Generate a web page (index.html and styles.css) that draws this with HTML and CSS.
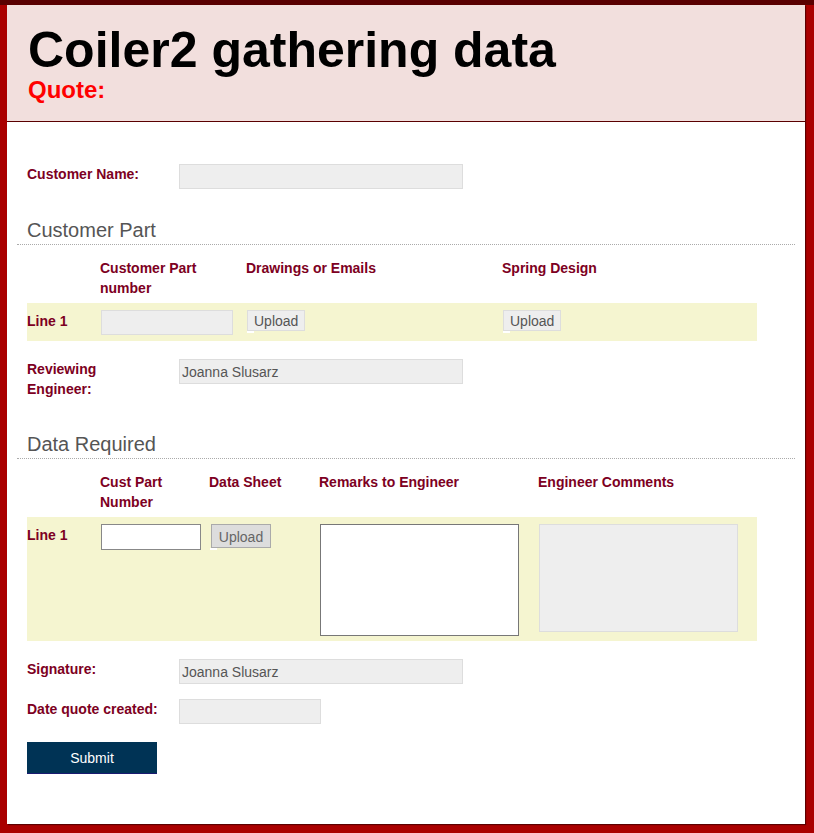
FILE: index.html
```html
<!DOCTYPE html>
<html lang="en">
<head>
  <meta charset="UTF-8" />
  <meta name="viewport" content="width=device-width, initial-scale=1" />
  <title>Coiler2 gathering data</title>
  <link rel="stylesheet" href="styles.css">
</head>
<body>

<div class="page">

  <!-- Page banner -->
  <header class="banner">
    <h1>Coiler2 gathering data</h1>
    <div class="quote">Quote:</div>
  </header>

  <form class="quote-form" onsubmit="return false;">

    <div class="field">
      <label class="label">Customer Name:</label>
      <input class="input readonly" type="text" readonly>
    </div>

    <h2 class="section">Customer Part</h2>

    <table class="lines parts">
      <colgroup>
        <col style="width: 73px">
        <col style="width: 146px">
        <col style="width: 256px">
        <col style="width: 255px">
      </colgroup>
      <tr>
        <th></th>
        <th>Customer Part<br>number</th>
        <th>Drawings or Emails</th>
        <th>Spring Design</th>
      </tr>
      <tr class="line-row">
        <td class="line-name">Line 1</td>
        <td><input class="input readonly part-no" type="text" readonly></td>
        <td><span class="file"><button type="button" class="upload muted">Upload</button><i class="file-mark"></i></span></td>
        <td><span class="file"><button type="button" class="upload muted">Upload</button><i class="file-mark"></i></span></td>
      </tr>
    </table>

    <div class="field field-tall">
      <label class="label">Reviewing<br>Engineer:</label>
      <input class="input readonly" type="text" value="Joanna Slusarz" readonly>
    </div>

    <h2 class="section">Data Required</h2>

    <table class="lines data">
      <colgroup>
        <col style="width: 73px">
        <col style="width: 109px">
        <col style="width: 110px">
        <col style="width: 219px">
        <col style="width: 219px">
      </colgroup>
      <tr>
        <th></th>
        <th>Cust Part<br>Number</th>
        <th>Data Sheet</th>
        <th>Remarks to Engineer</th>
        <th>Engineer Comments</th>
      </tr>
      <tr class="line-row tall-row">
        <td class="line-name">Line 1</td>
        <td><input class="input editable cust-no" type="text"></td>
        <td><span class="file"><button type="button" class="upload">Upload</button><i class="file-mark"></i></span></td>
        <td><textarea class="remarks"></textarea></td>
        <td><textarea class="comments" readonly></textarea></td>
      </tr>
    </table>

    <div class="field">
      <label class="label">Signature:</label>
      <input class="input readonly" type="text" value="Joanna Slusarz" readonly>
    </div>

    <div class="field">
      <label class="label">Date quote created:</label>
      <input class="input readonly date" type="text" readonly>
    </div>

    <button type="submit" class="submit">Submit</button>

  </form>
</div>

</body>
</html>
```

FILE: styles.css
```css
body {
  margin: 0;
  background: #aa0000;
  border-top: 5px solid #5a0000;
  font-family: "Liberation Sans", Arial, sans-serif;
  color: #222;
}

.page {
  width: 798px;
  margin: 0 0 9px 7px;
  background: #fff;
  box-shadow: 1px 1px 1px rgba(0, 0, 0, 0.45);
}

/* Banner */
.banner {
  background: #f2dfdd;
  border-bottom: 1px solid #5a0000;
  padding: 20px 21px 18px;
}

.banner h1 {
  margin: 0;
  font-size: 50px;
  line-height: 50px;
  font-weight: bold;
  color: #000;
}

.quote {
  margin-top: 2px;
  font-size: 24px;
  line-height: 26px;
  font-weight: bold;
  color: #ff0000;
}

/* Form */
.quote-form {
  padding: 27px 20px 50px;
}

.field {
  display: flex;
  align-items: flex-start;
  margin-top: 15px;
}

.field-tall {
  margin-bottom: 33px;
}

.label,
.lines th,
.line-name {
  font-size: 14px;
  line-height: 20px;
  font-weight: bold;
  color: #7d0022;
}

.label {
  width: 152px;
  flex-shrink: 0;
}

.input {
  box-sizing: border-box;
  width: 284px;
  height: 25px;
  margin: 0;
  padding: 1px 2px;
  font-family: "Liberation Sans", Arial, sans-serif;
  font-size: 14px;
  color: #555;
  outline: none;
}

.readonly {
  background: #eeeeee;
  border: 1px solid #dddddd;
}

.input.date {
  width: 142px;
}

.section {
  margin: 29px -10px 0;
  padding: 0 10px 2px;
  font-size: 20px;
  line-height: 24px;
  font-weight: normal;
  color: #555;
  border-bottom: 1px dotted #aaa;
}

/* Line tables */
.lines {
  width: 730px;
  margin: 8px 0 18px;
  border-collapse: collapse;
  table-layout: fixed;
}

.lines th {
  text-align: left;
  vertical-align: top;
  padding: 5px 0;
}

.lines td {
  vertical-align: top;
  padding: 7px 0 6px;
}

.line-row {
  background: #f5f5d0;
}

.tall-row td {
  padding-bottom: 5px;
}

.line-name {
  padding-top: 8px !important;
}

.part-no {
  width: 132px;
  margin-left: 1px;
}

.file {
  display: inline-block;
  margin-left: 1px;
}

.file-mark {
  display: block;
  width: 7px;
  height: 2px;
  background: #fff;
}

.upload {
  display: block;
  margin: 0;
  padding: 0 6px;
  font-family: "Liberation Sans", Arial, sans-serif;
  font-size: 14px;
  cursor: pointer;
}

.upload.muted {
  height: 21px;
  background: #eeeeee;
  border: 1px solid #dddddd;
  color: #555;
}

.data .upload {
  height: 24px;
  width: 60px;
  margin-left: 1px;
  padding-top: 2px;
  background: #dddddd;
  border: 1px solid #aaaaaa;
  color: #666;
}

.cust-no {
  width: 100px;
  height: 26px;
  margin-left: 1px;
  background: #fff;
  border: 1px solid #888;
}

.remarks,
.comments {
  display: block;
  box-sizing: border-box;
  width: 199px;
  margin: 0 0 0 1px;
  padding: 2px;
  resize: none;
  font-family: "Liberation Sans", Arial, sans-serif;
  outline: none;
}

.remarks {
  height: 112px;
  background: #fff;
  border: 1px solid #777;
}

.comments {
  height: 108px;
  background: #eeeeee;
  border: 1px solid #dddddd;
}

/* Submit */
.submit {
  display: block;
  width: 130px;
  height: 32px;
  margin-top: 18px;
  background: #003355;
  border: none;
  border-bottom: 1px solid #1a1a70;
  color: #fff;
  font-family: "Liberation Sans", Arial, sans-serif;
  font-size: 14px;
  cursor: pointer;
}
```
